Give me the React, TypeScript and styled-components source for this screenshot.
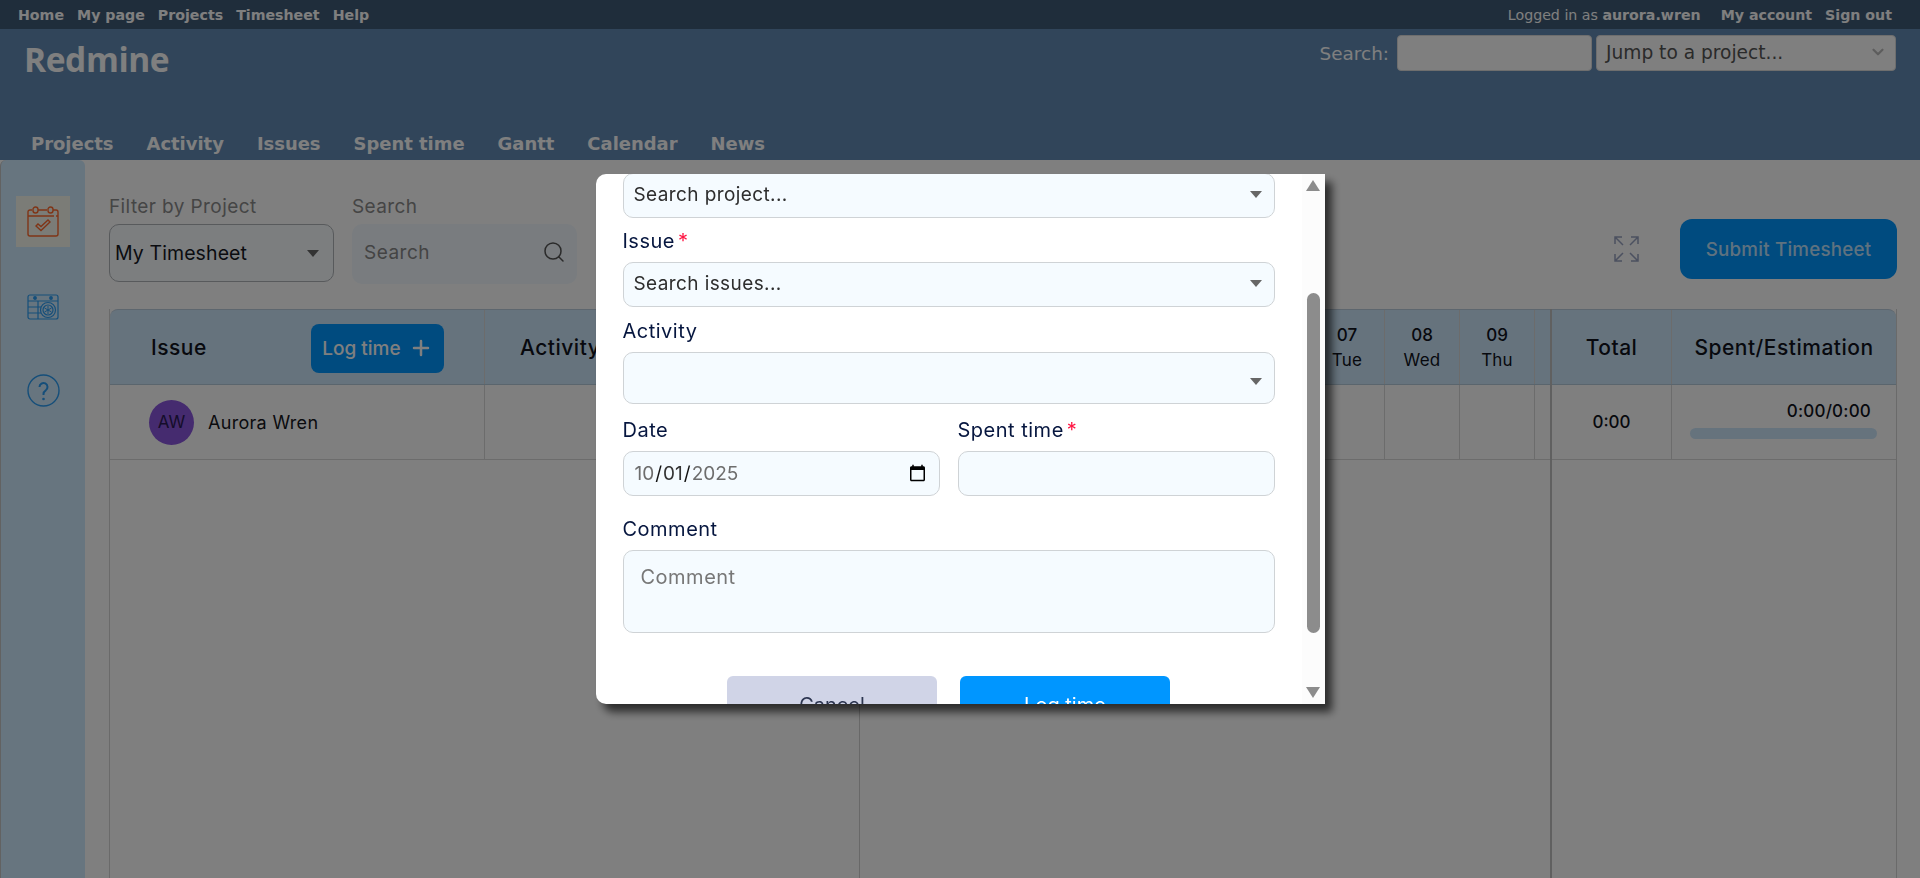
import React from 'react';
import styled, { createGlobalStyle } from 'styled-components';
import { ChevronDown, Plus, Search } from 'lucide-react';

const POPPINS = `Inter, "Noto Sans", sans-serif`;
const VERDANA = `"DejaVu Sans", Verdana, sans-serif`;

const GlobalStyle = createGlobalStyle`
    html, body {
        margin: 0;
        height: 100%;
        overflow: hidden;
        background: #fff;
    }
    * {
        box-sizing: border-box;
    }
`;

const Page = styled.div`
    display: flex;
    flex-direction: column;
    height: 100vh;
`;

/* redmine chrome */
const TopBar = styled.div`
    display: flex;
    justify-content: space-between;
    align-items: center;
    height: 29px;
    padding: 0 28px 0 18px;
    background: #3e5a76;
    color: #fff;
    font: 700 14.2px ${VERDANA};
`;

const TopLinks = styled.div`
    display: flex;
    align-items: center;
    gap: ${p => p.$gap}px;
`;

const Logged = styled.span`
    font-weight: 400;
    margin-right: 7px;
    strong {
        font-weight: 700;
    }
`;

const Header = styled.header`
    display: flex;
    flex-direction: column;
    justify-content: space-between;
    height: 131px;
    background: #628bb5;
    color: #fff;
`;

const HeaderTop = styled.div`
    display: flex;
    justify-content: space-between;
    align-items: flex-start;
    padding: 6px 24px 0 24px;
`;

const Logo = styled.h1`
    margin: 0;
    font: 700 33.500px/48px "Open Sans", sans-serif;
    letter-spacing: -0.4px;
`;

const QuickSearch = styled.div`
    display: flex;
    align-items: center;
    gap: 4px;
    font: 400 18.400px ${VERDANA};
`;

const QuickLabel = styled.label`
    margin-right: 4px;
`;

const QuickInput = styled.input`
    width: 195px;
    height: 36px;
    border: 1px solid #ddd;
    border-radius: 4px;
    background: #fff;
`;

const QuickSelect = styled.div`
    display: flex;
    justify-content: space-between;
    align-items: center;
    width: 300px;
    height: 36px;
    padding: 0 8px 2px 9px;
    border: 1px solid #ddd;
    border-radius: 4px;
    background: #fff;
    color: #555;
    font: 400 18.600px ${VERDANA};
    svg {
        color: #bbb;
    }
`;

const MainMenu = styled.nav`
    display: flex;
    gap: 33px;
    padding: 0 0 3px 31px;
    font: 700 17.950px/27px ${VERDANA};
`;

/* timesheet body */
const Main = styled.div`
    display: flex;
    flex: 1;
    min-height: 0;
`;

const Sidebar = styled.aside`
    display: flex;
    flex-direction: column;
    align-items: center;
    flex: none;
    width: 85px;
    padding-top: 36px;
    background: #ceeafe;
    border-left: 1px solid #c4c4c4;
    border-radius: 6px 6px 0 0;
`;

const SideItem = styled.div`
    display: flex;
    align-items: center;
    justify-content: center;
    width: 54px;
    height: 51px;
    margin-bottom: ${p => p.$mb}px;
    background: ${p => (p.$active ? '#f6f8ee' : 'transparent')};
`;

const Content = styled.div`
    display: flex;
    flex-direction: column;
    flex: 1;
    min-width: 0;
    padding: 33px 23px 0 24px;
`;

const Toolbar = styled.div`
    display: flex;
    align-items: flex-start;
    gap: 18px;
    height: 116px;
    flex: none;
`;

const FilterGroup = styled.div`
    display: flex;
    flex-direction: column;
    gap: 4px;
    width: 225px;
`;

const FilterLabel = styled.label`
    color: #8b8b8b;
    font: 400 19px/27px ${POPPINS};
    letter-spacing: 0.4px;
`;

const ProjectSelect = styled.div`
    display: flex;
    justify-content: space-between;
    align-items: center;
    height: 58px;
    padding: 0 14px 0 5px;
    border: 1px solid #b0b4b8;
    border-radius: 10px;
    background: #f8fcff;
    color: #16181f;
    font: 400 19.500px ${POPPINS};
    letter-spacing: 0.1px;
`;

const SearchBox = styled.div`
    display: flex;
    justify-content: space-between;
    align-items: center;
    height: 60px;
    padding: 0 11px 4px 12px;
    border-radius: 10px;
    background: #f2f9ff;
    color: #555;
    svg {
        color: #555;
    }
`;

const SearchInput = styled.input`
    width: 150px;
    border: 0;
    padding: 0;
    background: transparent;
    outline: none;
    font: 400 19px ${POPPINS};
    letter-spacing: 0.5px;
    &::placeholder {
        color: #888;
        opacity: 1;
    }
`;

const Actions = styled.div`
    display: flex;
    align-items: center;
    gap: 41px;
    margin: 26px 0 0 auto;
`;

const SubmitButton = styled.button`
    width: 217px;
    height: 60px;
    border: 0;
    border-radius: 12px;
    background: #0096ff;
    color: #ffffffc0;
    font: 500 18.800px ${POPPINS};
    letter-spacing: 0.2px;
`;

const Caret = styled.span`
    flex: none;
    width: 0;
    height: 0;
    margin-top: ${p => p.$drop || 0}px;
    border-left: 6px solid transparent;
    border-right: 6px solid transparent;
    border-top: 7px solid #666;
`;

const Table = styled.div`
    display: flex;
    flex: 1;
    min-height: 0;
    border-left: 1px solid #d4d4d4;
    border-right: 1px solid #d4d4d4;
`;

const Pane = styled.div`
    display: flex;
    flex-direction: column;
    flex: none;
    width: ${p => p.$width}px;
    border-right: ${p => p.$edge || 'none'};
`;

const HeadRow = styled.div`
    display: flex;
    flex: none;
    height: 76px;
    background: #cde7fb;
    border-top: 1px solid #bcd;
    border-bottom: 1px solid #b5cbdb;
    border-radius: ${p => p.$radius || '0'};
`;

const BodyRow = styled.div`
    display: flex;
    flex: none;
    height: 75px;
    border-bottom: 1px solid #d8d8d8;
`;

const Cell = styled.div`
    display: flex;
    flex-direction: ${p => (p.$column ? 'column' : 'row')};
    align-items: center;
    justify-content: ${p => p.$justify || 'center'};
    flex: none;
    width: ${p => p.$width}px;
    padding: ${p => p.$padding || '0'};
    border-right: ${p => (p.$last ? 'none' : '1px solid #d8d8d8')};
    color: #10131c;
    font: 500 21px ${POPPINS};
    letter-spacing: 0.5px;
`;

const LogTimeButton = styled.button`
    display: flex;
    align-items: center;
    justify-content: center;
    gap: 8px;
    width: 133px;
    height: 49px;
    margin: 2px 0 0 auto;
    border: 0;
    border-radius: 8px;
    background: #0096ff;
    color: #fff;
    font: 500 19px ${POPPINS};
`;

const Avatar = styled.div`
    display: flex;
    align-items: center;
    justify-content: center;
    flex: none;
    width: 45px;
    height: 45px;
    border-radius: 50%;
    background: #8a57de;
    color: #2a1a55;
    font: 400 17px ${POPPINS};
    letter-spacing: 0;
`;

const UserName = styled.span`
    margin-left: 14px;
    color: #15161c;
    font: 400 18px ${POPPINS};
    letter-spacing: 0.3px;
`;

const DayNumber = styled.span`
    font: 500 17px/26px ${POPPINS};
    letter-spacing: 0;
`;

const DayName = styled.span`
    font: 400 17px/24px ${POPPINS};
    letter-spacing: 0.2px;
`;

const DayStrip = styled.div`
    display: flex;
    overflow: hidden;
`;

const SpentValue = styled.span`
    align-self: flex-end;
    padding-right: 6px;
    font: 500 17px/22px ${POPPINS};
    letter-spacing: 0.2px;
`;

const SpentBar = styled.div`
    width: 187px;
    height: 11px;
    margin-top: 6px;
    border-radius: 6px;
    background: #cde7fb;
`;

/* modal */
const Overlay = styled.div`
    position: fixed;
    inset: 0;
    z-index: 10;
    display: flex;
    align-items: center;
    justify-content: center;
    background: rgba(0, 0, 0, 0.5);
`;

const Modal = styled.div`
    display: flex;
    width: 729px;
    height: 530px;
    overflow: hidden;
    border-radius: 10px 0 0 10px;
    background: #fff;
    box-shadow: 7px 8px 9px rgba(0, 0, 0, 0.65);
`;

const Form = styled.form`
    flex: 1;
    min-width: 0;
    padding: 0 27px;
`;

const ScrollRail = styled.div`
    display: flex;
    flex-direction: column;
    align-items: center;
    flex: none;
    width: 23px;
    padding: 6px 0;
    background: #fcfcfc;
`;

const ScrollArrow = styled.span`
    flex: none;
    width: 0;
    height: 0;
    margin-top: ${p => (p.$down ? 'auto' : '0')};
    border-left: 7px solid transparent;
    border-right: 7px solid transparent;
    border-bottom: ${p => (p.$down ? '0' : '11px solid #8c8c8c')};
    border-top: ${p => (p.$down ? '11px solid #8c8c8c' : '0')};
`;

const ScrollThumb = styled.div`
    flex: none;
    width: 13px;
    height: 340px;
    margin-top: 102px;
    border-radius: 7px;
    background: #8c8c8c;
`;

const Group = styled.div`
    display: flex;
    flex-direction: column;
    flex: 1;
    min-width: 0;
    margin-top: ${p => p.$mt || 0}px;
`;

const GroupRow = styled.div`
    display: flex;
    gap: 18px;
    margin-top: ${p => p.$mt}px;
`;

const Label = styled.label`
    height: 27px;
    margin-bottom: 7px;
    color: #06163f;
    font: 400 20px/27px ${POPPINS};
    letter-spacing: 0.5px;
`;

const Required = styled.span`
    margin-left: 3px;
    color: #ff1744;
`;

const SelectField = styled.div`
    display: flex;
    justify-content: space-between;
    align-items: center;
    height: ${p => p.$height}px;
    margin-top: ${p => p.$mt || 0}px;
    padding: 0 12px 2px 10px;
    border: 1px solid #cfd3d6;
    border-radius: 10px;
    background: #f5fbff;
    color: #2e2e2e;
    font: 400 19px ${POPPINS};
    letter-spacing: 0.4px;
`;

const fieldStyles = `
    width: 100%;
    border: 1px solid #cfd3d6;
    border-radius: 10px;
    background: #f5fbff;
    outline: none;
`;

const DateField = styled.input`
    ${fieldStyles}
    height: 45px;
    padding: 0 10px;
    color: #111;
    font: 400 19px ${POPPINS};
    &::-webkit-datetime-edit-month-field,
    &::-webkit-datetime-edit-year-field {
        color: #6d6d6d;
    }
    &::-webkit-datetime-edit-day-field {
        color: #333;
    }
`;

const TimeField = styled.input`
    ${fieldStyles}
    height: 45px;
    padding: 0 10px;
`;

const CommentField = styled.textarea`
    ${fieldStyles}
    display: block;
    height: 83px;
    padding: 14px 17px;
    resize: none;
    font: 400 20px ${POPPINS};
    letter-spacing: 0.5px;
    &::placeholder {
        color: #777;
        opacity: 1;
    }
`;

const ModalActions = styled.div`
    display: flex;
    justify-content: center;
    gap: 23px;
    margin-top: 43px;
`;

const ModalButton = styled.button`
    flex: none;
    width: 210px;
    height: 58px;
    border: 0;
    border-radius: 6px;
    background: ${p => (p.$primary ? '#0096ff' : '#d0d4e7')};
    color: ${p => (p.$primary ? '#fff' : '#2c3550')};
    font: 400 20px ${POPPINS};
`;

const CalendarCheckIcon = () => (
    <svg width="32" height="31" viewBox="0 0 32 31" fill="none" stroke="#ff6a2e" strokeWidth="1.4">
        <path d="M5 4H3A2 2 0 0 0 1 6v22a2 2 0 0 0 2 2h26a2 2 0 0 0 2-2V6a2 2 0 0 0-2-2h-3M11 4h9" />
        <rect x="6" y="1" width="5" height="6" rx="2.500" />
        <rect x="21" y="1" width="5" height="6" rx="2.500" />
        <path d="M1 10h26M29 10h2" />
        <path d="M9 20l2-2 3 2.500 7-6.500 2 2-9 8.500z" />
    </svg>
);

const FreezerCalendarIcon = () => (
    <svg width="32" height="26" viewBox="0 0 32 26" fill="none" stroke="#2a9df4" strokeWidth="1.2">
        <rect x="1" y="1" width="30" height="24" rx="2" />
        <path d="M1 7h30M1 13h13M1 19h13M11 7v18" />
        <circle cx="8" cy="4" r="1.300" fill="#2a9df4" />
        <circle cx="24" cy="4" r="1.300" fill="#2a9df4" />
        <circle cx="21" cy="16" r="7.500" fill="#ceeafe" />
        <circle cx="21" cy="16" r="5" />
        <path d="M21 12v8M17.500 14l7 4M24.500 14l-7 4" strokeWidth="1" />
    </svg>
);

const HelpIcon = () => (
    <svg width="33" height="33" viewBox="0 0 33 33" fill="none" stroke="#2a9df4" strokeWidth="1.4">
        <circle cx="16.500" cy="16.500" r="15.500" />
        <path d="M12.500 13a4 4 0 1 1 6.300 3.300c-1.500 1-2.300 1.800-2.300 3.700v1" strokeWidth="2" />
        <circle cx="16.500" cy="25" r="1.300" fill="#2a9df4" stroke="none" />
    </svg>
);

const ExpandIcon = () => (
    <svg width="25" height="26" viewBox="0 0 25 26" fill="none" stroke="#98a2c0" strokeWidth="1.500">
        <path d="M1 8V1h7M1 1l8 8M17 1h7v7M24 1l-8 8M1 18v7h7M1 25l8-8M24 18v7h-7M24 25l-8-8" />
    </svg>
);

// the first six columns and the last one have nothing showing, the modal covers them
const days = [
    ['', ''],
    ['', ''],
    ['', ''],
    ['', ''],
    ['', ''],
    ['', ''],
    ['07', 'Tue'],
    ['08', 'Wed'],
    ['09', 'Thu'],
    ['', '']
];

const topLinks = ['Home', 'My page', 'Projects', 'Timesheet', 'Help'];
const menuLinks = ['Projects', 'Activity', 'Issues', 'Spent time', 'Gantt', 'Calendar', 'News'];

export default function App() {
    return (
        <Page>
            <GlobalStyle />
            <TopBar>
                <TopLinks $gap={13}>
                    {topLinks.map(l => (
                        <span key={l}>{l}</span>
                    ))}
                </TopLinks>
                <TopLinks $gap={13}>
                    <Logged>
                        Logged in as <strong>aurora.wren</strong>
                    </Logged>
                    <span>My account</span>
                    <span>Sign out</span>
                </TopLinks>
            </TopBar>
            <Header>
                <HeaderTop>
                    <Logo>Redmine</Logo>
                    <QuickSearch>
                        <QuickLabel>Search:</QuickLabel>
                        <QuickInput />
                        <QuickSelect>
                            Jump to a project...
                            <ChevronDown size={18} strokeWidth={3} />
                        </QuickSelect>
                    </QuickSearch>
                </HeaderTop>
                <MainMenu>
                    {menuLinks.map(l => (
                        <span key={l}>{l}</span>
                    ))}
                </MainMenu>
            </Header>
            <Main>
                <Sidebar>
                    <SideItem $active $mb={34}>
                        <CalendarCheckIcon />
                    </SideItem>
                    <SideItem $mb={33}>
                        <FreezerCalendarIcon />
                    </SideItem>
                    <SideItem>
                        <HelpIcon />
                    </SideItem>
                </Sidebar>
                <Content>
                    <Toolbar>
                        <FilterGroup>
                            <FilterLabel>Filter by Project</FilterLabel>
                            <ProjectSelect>
                                My Timesheet
                                <Caret />
                            </ProjectSelect>
                        </FilterGroup>
                        <FilterGroup>
                            <FilterLabel>Search</FilterLabel>
                            <SearchBox>
                                <SearchInput placeholder="Search" />
                                <Search size={24} strokeWidth={1.5} />
                            </SearchBox>
                        </FilterGroup>
                        <Actions>
                            <ExpandIcon />
                            <SubmitButton>Submit Timesheet</SubmitButton>
                        </Actions>
                    </Toolbar>
                    <Table>
                        <Pane $width={750} $edge="1px solid #d0d0d0">
                            <HeadRow $radius="8px 0 0 0">
                                <Cell $width={375} $justify="flex-start" $padding="0 40px 0 41px">
                                    Issue
                                    <LogTimeButton>
                                        Log time <Plus size={24} strokeWidth={2.5} />
                                    </LogTimeButton>
                                </Cell>
                                <Cell $width={375} $justify="flex-start" $padding="0 0 0 35px" $last>
                                    Activity
                                </Cell>
                            </HeadRow>
                            <BodyRow>
                                <Cell $width={375} $justify="flex-start" $padding="0 0 0 39px">
                                    <Avatar>AW</Avatar>
                                    <UserName>Aurora Wren</UserName>
                                </Cell>
                                <Cell $width={375} $last />
                            </BodyRow>
                        </Pane>
                        <Pane $width={692} $edge="2px solid #c0c0c0">
                            <HeadRow>
                                <DayStrip>
                                    {days.map(([n, d], i) => (
                                        <Cell key={i} $width={75} $column>
                                            <DayNumber>{n}</DayNumber>
                                            <DayName>{d}</DayName>
                                        </Cell>
                                    ))}
                                </DayStrip>
                            </HeadRow>
                            <BodyRow>
                                <DayStrip>
                                    {days.map((_, i) => (
                                        <Cell key={i} $width={75} />
                                    ))}
                                </DayStrip>
                            </BodyRow>
                        </Pane>
                        <Pane $width={344}>
                            <HeadRow $radius="0 8px 0 0">
                                <Cell $width={120}>Total</Cell>
                                <Cell $width={224} $last>
                                    Spent/Estimation
                                </Cell>
                            </HeadRow>
                            <BodyRow>
                                <Cell $width={120}>
                                    <DayNumber>0:00</DayNumber>
                                </Cell>
                                <Cell $width={224} $column $padding="0 19px 5px 18px" $last>
                                    <SpentValue>0:00/0:00</SpentValue>
                                    <SpentBar />
                                </Cell>
                            </BodyRow>
                        </Pane>
                    </Table>
                </Content>
            </Main>
            <Overlay>
                <Modal>
                    <Form>
                        <SelectField $height={45} $mt={-1}>
                            Search project...
                            <Caret />
                        </SelectField>
                        <Group $mt={10}>
                            <Label>
                                Issue<Required>*</Required>
                            </Label>
                            <SelectField $height={45}>
                                Search issues...
                                <Caret />
                            </SelectField>
                        </Group>
                        <Group $mt={11}>
                            <Label>Activity</Label>
                            <SelectField $height={52}>
                                <span />
                                <Caret $drop={8} />
                            </SelectField>
                        </Group>
                        <GroupRow $mt={13}>
                            <Group>
                                <Label>Date</Label>
                                <DateField type="date" defaultValue="2025-10-01" />
                            </Group>
                            <Group>
                                <Label>
                                    Spent time<Required>*</Required>
                                </Label>
                                <TimeField />
                            </Group>
                        </GroupRow>
                        <Group $mt={20}>
                            <Label>Comment</Label>
                            <CommentField placeholder="Comment" />
                        </Group>
                        <ModalActions>
                            <ModalButton type="button">Cancel</ModalButton>
                            <ModalButton type="button" $primary>
                                Log time
                            </ModalButton>
                        </ModalActions>
                    </Form>
                    <ScrollRail>
                        <ScrollArrow />
                        <ScrollThumb />
                        <ScrollArrow $down />
                    </ScrollRail>
                </Modal>
            </Overlay>
        </Page>
    );
}
